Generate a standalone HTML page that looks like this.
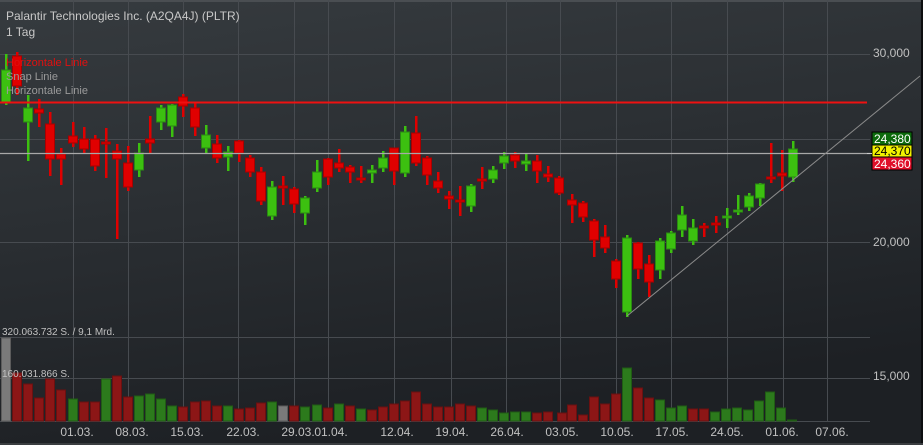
<!DOCTYPE html>
<html><head><meta charset="utf-8"><style>
html,body{margin:0;padding:0;width:923px;height:445px;overflow:hidden;background:#22252a;}
svg{display:block}
text{font-family:"Liberation Sans",sans-serif;}
</style></head><body>
<svg id="s" width="923" height="445" xmlns="http://www.w3.org/2000/svg">
<defs><linearGradient id="bg" x1="0" y1="0" x2="0.3" y2="1">
<stop offset="0" stop-color="#363b3f"/><stop offset="0.5" stop-color="#2a2e32"/><stop offset="1" stop-color="#1d2024"/></linearGradient></defs>
<rect width="923" height="445" fill="url(#bg)"/>
<rect x="0" y="0" width="923" height="2" fill="#4a4e52"/>
<rect x="921" y="0" width="2" height="445" fill="#0d0e10"/>
<rect x="0" y="443" width="923" height="2" fill="#3a3d40"/>
<g id="grid" stroke="#474b50" stroke-width="1"></g>
<g id="vol"></g>
<g id="cd"></g>
<line x1="0" y1="102.5" x2="867" y2="102.5" stroke="#ee1111" stroke-width="2"/>
<line x1="0" y1="153.5" x2="870" y2="153.5" stroke="#a8a8a8" stroke-width="1.3"/>
<line x1="627" y1="316" x2="920" y2="76" stroke="#8a8a8a" stroke-width="1"/>
<text x="6" y="20" font-size="12" fill="#c8c8c8">Palantir Technologies Inc. (A2QA4J) (PLTR)</text>
<text x="6" y="36" font-size="12" fill="#c8c8c8">1 Tag</text>
<text x="6" y="66" font-size="11" fill="#e01010">Horizontale Linie</text>
<text x="6" y="80" font-size="11" fill="#9a9a9a">Snap Linie</text>
<text x="6" y="94" font-size="11" fill="#9a9a9a">Horizontale Linie</text>
<text x="873" y="57" font-size="12" fill="#c0c0c0">30,000</text>
<text x="873" y="246" font-size="12" fill="#c0c0c0">20,000</text>
<text x="873" y="380" font-size="12" fill="#c0c0c0">15,000</text>
<text x="2" y="335" font-size="10" fill="#c0c0c0">320.063.732 S. / 9,1 Mrd.</text>
<text x="2" y="377" font-size="10" fill="#c0c0c0">160.031.866 S.</text>
<rect x="872" y="132" width="40" height="13" fill="#0c6a0c" stroke="#000" stroke-width="1"/>
<rect x="872" y="145" width="40" height="12" fill="#f2f200" stroke="#000" stroke-width="1"/>
<rect x="872" y="157" width="40" height="13" fill="#e0102a" stroke="#000" stroke-width="1"/>
<line x1="867" y1="153.5" x2="872" y2="153.5" stroke="#ccc"/>
<text x="874" y="143" font-size="12" fill="#fff">24,380</text>
<text x="874" y="155" font-size="12" fill="#000">24,370</text>
<text x="874" y="168" font-size="12" fill="#fff">24,360</text>
<g font-size="12" fill="#c0c0c0" text-anchor="middle">
<text x="77" y="436">01.03.</text><text x="132" y="436">08.03.</text><text x="187" y="436">15.03.</text>
<text x="243" y="436">22.03.</text><text x="298" y="436">29.03.</text><text x="331" y="436">01.04.</text>
<text x="397" y="436">12.04.</text><text x="452" y="436">19.04.</text><text x="507" y="436">26.04.</text>
<text x="562" y="436">03.05.</text><text x="617" y="436">10.05.</text><text x="672" y="436">17.05.</text>
<text x="727" y="436">24.05.</text><text x="782" y="436">01.06.</text><text x="832" y="436">07.06.</text>
</g>
</svg>
<script>
var NS="http://www.w3.org/2000/svg";
function el(p,t,a){var e=document.createElementNS(NS,t);for(var k in a)e.setAttribute(k,a[k]);p.appendChild(e);return e;}
var g=document.getElementById('grid');
[73,128,183,238,294,328,394,451,506,560,616,671,727,783,827].forEach(function(x){el(g,'line',{x1:x+.5,y1:0,x2:x+.5,y2:421});});
[54,139,242,337,378].forEach(function(y){el(g,'line',{x1:0,y1:y+.5,x2:870,y2:y+.5});});
el(g,'line',{x1:0,y1:421.5,x2:870,y2:421.5});
var C=[[6,54,70,102,105,1],[17,52,56,86,95,0],[28,95,108,122,161,1],[39,99,109,113,127,0],[50,112,124,159,176,0],[61,148,154,159,185,0],[73,122,136,143,147,0],[84,127,139,149,153,0],[95,135,139,166,171,0],[106,128,142,143,178,0],[117,144,151,159,239,0],[128,146,163,187,191,0],[139,143,153,170,177,1],[150,116,139,143,153,0],[161,105,108,122,130,1],[172,104,105,126,137,1],[183,94,97,106,117,0],[195,102,108,127,136,0],[206,125,135,148,153,1],[217,135,144,158,163,0],[228,146,152,157,171,1],[239,140,141,153,162,0],[250,155,158,172,177,0],[261,167,172,201,205,0],[272,181,187,216,220,1],[283,176,186,187,205,0],[294,187,189,204,213,0],[305,196,198,213,225,1],[317,160,172,188,192,1],[328,158,159,177,185,0],[339,149,163,168,172,0],[350,165,167,172,183,0],[361,166,178,180,183,0],[372,165,170,173,183,1],[383,151,158,168,172,1],[394,148,148,171,185,0],[405,126,132,173,177,1],[416,116,133,163,166,0],[427,156,158,175,185,0],[438,172,181,188,193,0],[449,191,196,199,209,0],[460,186,200,202,216,0],[471,184,186,206,212,1],[482,167,179,181,189,0],[493,166,170,179,183,1],[504,152,156,163,169,1],[515,152,155,161,168,0],[526,154,161,164,171,1],[537,155,161,171,183,0],[548,166,174,177,182,0],[559,176,178,193,195,0],[572,194,200,205,223,0],[583,201,203,217,222,0],[594,219,221,240,257,0],[605,225,237,248,253,0],[616,259,261,279,288,0],[627,235,238,312,317,1],[638,242,243,269,279,0],[649,255,264,282,297,0],[660,238,241,270,279,1],[671,231,233,249,253,1],[682,206,215,230,237,1],[693,219,228,241,245,1],[704,223,226,228,237,0],[716,216,223,225,233,0],[727,208,216,218,228,1],[738,195,210,211,215,1],[749,193,196,207,211,1],[760,183,184,198,206,1],[771,143,177,179,183,0],[782,150,173,176,191,0],[793,141,149,177,182,1]];
var cd=document.getElementById('cd');
C.forEach(function(c){var col=c[5]?'#3cc010':'#e00000',bd=c[5]?'#2a8a12':'#a80000';
el(cd,'rect',{x:c[0]-1,y:c[1],width:2.5,height:c[4]-c[1],fill:col});
var h=Math.max(c[3]-c[2],2);
el(cd,'rect',{x:c[0]-4.5,y:c[2],width:9,height:h,fill:col,stroke:bd,'stroke-width':1});});
var V=[[6,338,2],[17,373,0],[28,384,0],[39,398,0],[50,379,0],[61,390,0],[73,399,1],[84,402,0],[95,402,0],[106,379,1],[117,376,0],[128,397,0],[139,396,1],[150,394,1],[161,399,1],[172,406,1],[183,407,0],[195,402,0],[206,401,0],[217,406,0],[228,406,1],[239,409,0],[250,408,0],[261,403,0],[272,402,1],[283,406,2],[294,406,0],[305,407,1],[317,405,1],[328,408,0],[339,404,1],[350,406,0],[361,409,1],[372,410,0],[383,407,0],[394,404,0],[405,401,0],[416,392,0],[427,404,0],[438,407,0],[449,407,0],[460,404,0],[471,406,0],[482,408,1],[493,410,1],[504,413,1],[515,412,1],[526,412,1],[537,413,0],[548,412,0],[562,413,0],[572,405,0],[583,415,0],[594,397,0],[605,404,0],[616,394,0],[627,368,1],[638,388,0],[649,398,0],[660,400,1],[671,408,1],[682,406,1],[693,409,0],[704,409,0],[715,412,1],[726,409,1],[737,408,1],[748,410,1],[759,401,1],[770,392,1],[781,408,1],[792,420,1]];
var vg=document.getElementById('vol');
V.forEach(function(v){var f=['#8c1616','#2c7a1c','#7a7a7a'][v[2]],s=['#6a1010','#205c14','#5c5c5c'][v[2]];
el(vg,'rect',{x:v[0]-4.5,y:v[1],width:9,height:421-v[1],fill:f,stroke:s,'stroke-width':1});});
</script>
</body></html>
